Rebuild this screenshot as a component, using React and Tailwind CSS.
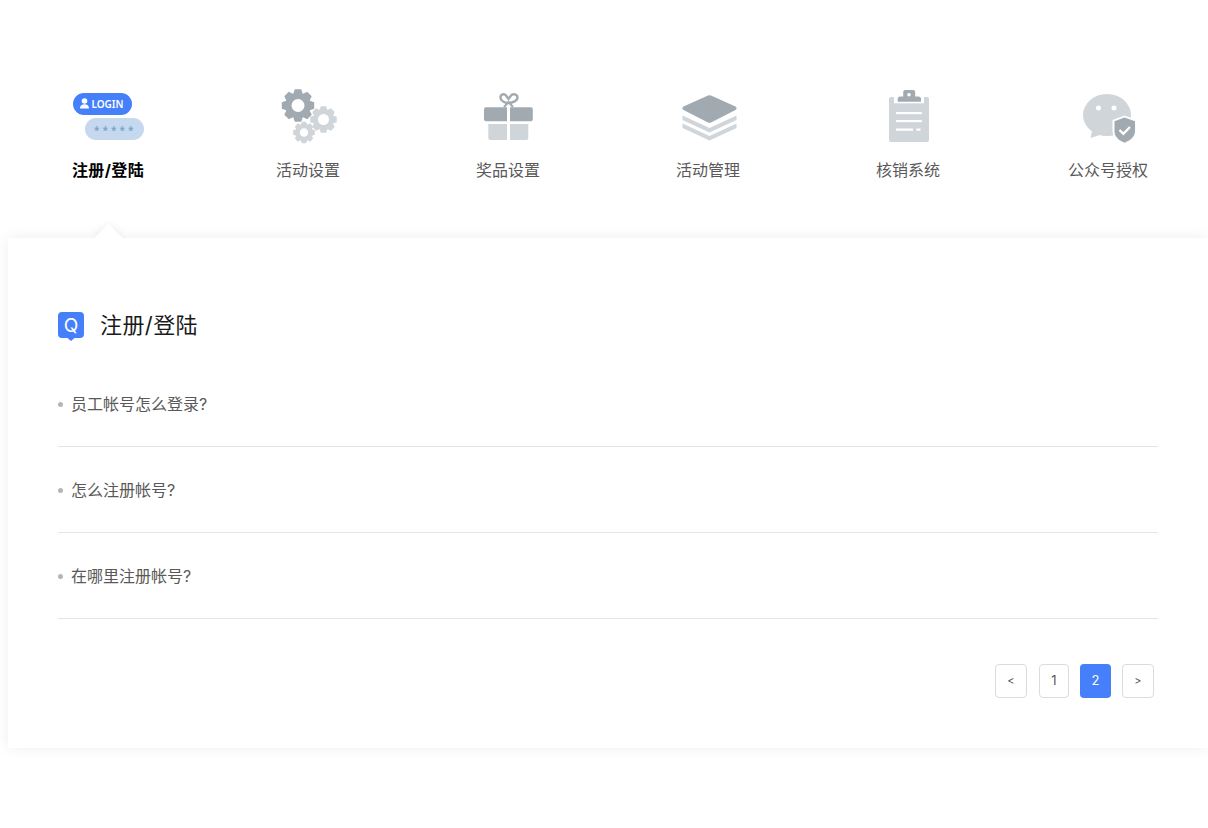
const F = "font-['Inter','Noto_Sans_CJK_SC',sans-serif]";

function gearPath(cx, cy, r, teeth = 8) {
  const pts = [];
  const outer = r, inner = r * 0.78;
  for (let i = 0; i < teeth; i++) {
    const a = (i / teeth) * Math.PI * 2;
    const w = Math.PI / teeth;
    [[-w * 0.95, inner], [-w * 0.5, outer], [w * 0.5, outer], [w * 0.95, inner]].forEach(([d, rad]) => {
      pts.push(`${(cx + Math.cos(a + d) * rad).toFixed(2)} ${(cy + Math.sin(a + d) * rad).toFixed(2)}`);
    });
  }
  return "M" + pts.join("L") + "Z";
}

const dark = "#a2aab1";
const light = "#d0d5da";

const IconLogin = () => (
  <svg width="80" height="56" viewBox="0 0 80 56" className="block">
    <rect x="5" y="5" width="59" height="22" rx="11" fill="#4580fa" />
    <circle cx="16.500" cy="13" r="2.800" fill="#fff" />
    <path d="M12 20.500c0-3 2-4.200 4.500-4.200s4.500 1.200 4.500 4.200z" fill="#fff" />
    <text x="23.500" y="20" fontSize="10" fontWeight="600" fill="#fff" fontFamily="Noto Sans, sans-serif" textLength="32">LOGIN</text>
    <rect x="17" y="30" width="59" height="22" rx="11" fill="#c6d8ee" />
    <text x="26" y="46" fontSize="10" fontWeight="700" fill="#7ba5cf" fontFamily="Noto Sans, sans-serif" letterSpacing="3.100">*****</text>
  </svg>
);

const IconGears = () => (
  <svg width="80" height="56" viewBox="0 0 80 56" className="block">
    <path d={gearPath(30, 17.500, 16.500)} fill={dark} />
    <circle cx="30" cy="17.500" r="6.500" fill="#fff" />
    <path d={gearPath(55.500, 31.500, 13.500)} fill={light} />
    <circle cx="55.500" cy="31.500" r="5.500" fill="#fff" />
    <path d={gearPath(36, 44.500, 11)} fill={light} />
    <circle cx="36" cy="44.500" r="4.200" fill="#fff" />
  </svg>
);

const IconGift = () => (
  <svg width="80" height="56" viewBox="0 0 80 56" className="block">
    <path d="M40.500 15C36 15 32.500 12.500 32.500 9.500S36 5 38 7.500l2.500 3.500 2.500-3.500C45 5 49.500 6.500 49.500 9.500S45 15 40.500 15z" fill="none" stroke={dark} strokeWidth="2.400" />
    <path d="M36 19l4.500-5 4.500 5" fill="none" stroke={dark} strokeWidth="2" />
    <path d="M16 21.300a2 2 0 0 1 2-2h21v14H18a2 2 0 0 1-2-2z" fill={dark} />
    <path d="M42 19.300h20.800a2 2 0 0 1 2 2v10a2 2 0 0 1-2 2H42z" fill={dark} />
    <path d="M20.300 36H39v16H22.300a2 2 0 0 1-2-2z" fill={light} />
    <path d="M42 36h18.300v14a2 2 0 0 1-2 2H42z" fill={light} />
  </svg>
);

const IconLayers = () => (
  <svg width="80" height="56" viewBox="0 0 80 56" className="block">
    <path d="M14.500 35.500L41.500 48l27-12.500V40l-27 12.500L14.500 40z" fill={light} />
    <path d="M14.500 27.500L41.500 40l27-12.500V32l-27 12.500L14.500 32z" fill={light} />
    <path d="M15.500 18.500L40 7.500a4 4 0 0 1 3 0L67.500 18.500a2 2 0 0 1 0 3.500L43 34.500a4 4 0 0 1-3 0L15.500 22a2 2 0 0 1 0-3.500z" fill={dark} />
  </svg>
);

const IconClipboard = () => (
  <svg width="80" height="56" viewBox="0 0 80 56" className="block">
    <rect x="21" y="9" width="40" height="45" rx="2" fill={light} />
    <path d="M26 5h30v10.300H26z" fill="#fff" />
    <path d="M29.700 13.700V11a2.500 2.500 0 0 1 2.500-2.500h3V4a2 2 0 0 1 2-2h8a2 2 0 0 1 2 2v4.500h3.300A2.500 2.500 0 0 1 53 11v2.700z" fill={dark} />
    <circle cx="41" cy="6.700" r="1.800" fill="#fff" />
    <rect x="28" y="24" width="26" height="2.200" fill="#fff" />
    <rect x="28" y="32" width="26" height="2.200" fill="#fff" />
    <rect x="28" y="40.500" width="17" height="2.200" fill="#fff" />
    <rect x="48.500" y="40.500" width="4" height="2.200" fill="#fff" />
  </svg>
);

const IconWechat = () => (
  <svg width="80" height="56" viewBox="0 0 80 56" className="block">
    <ellipse cx="39" cy="27" rx="24" ry="21" fill={light} />
    <path d="M22.500 50l2.500-12 10 8z" fill={light} />
    <circle cx="30.500" cy="20" r="2.500" fill="#fff" />
    <circle cx="46" cy="20" r="2.500" fill="#fff" />
    <path d="M44.500 32l12-4.500 12 4.500v11c0 7-6 11-12 13.500C50.500 54 44.500 50 44.500 43z" fill="#fff" />
    <path d="M46.500 33.200l10-3.700 10.500 3.700v10c0 5.700-5 9.300-10.500 11.500C51 52.500 46.500 49 46.500 43.200z" fill={dark} />
    <path d="M51.500 42l3.800 3.800 6.700-6.800" fill="none" stroke="#fff" strokeWidth="2.400" />
  </svg>
);

const tabs = [
  { label: "注册/登陆", Icon: IconLogin, active: true },
  { label: "活动设置", Icon: IconGears },
  { label: "奖品设置", Icon: IconGift },
  { label: "活动管理", Icon: IconLayers },
  { label: "核销系统", Icon: IconClipboard },
  { label: "公众号授权", Icon: IconWechat },
];

const questions = ["员工帐号怎么登录?", "怎么注册帐号?", "在哪里注册帐号?"];

export default function App() {
  return (
    <div className={`${F} bg-white h-[828px] w-[1208px] overflow-hidden pl-2 pt-[88px]`}>
      <div className="flex w-[1200px]">
        {tabs.map(({ label, Icon, active }) => (
          <div key={label} className="w-[200px] flex flex-col items-center">
            <Icon />
            <div className={`mt-[15px] text-base leading-[22px] ${active ? "font-bold text-black tracking-[0.4px]" : "text-[#595959]"}`}>{label}</div>
          </div>
        ))}
      </div>
      <div className="relative w-[1200px] h-[510px] mt-[57px] bg-white shadow-[0_0_14px_rgba(0,0,0,0.07)] px-[50px] pt-[74px]">
        <div className="absolute left-[70px] top-[-20px] w-[60px] h-[20px] overflow-hidden">
          <div className="absolute left-[19.500px] top-[9.500px] w-[21px] h-[21px] rotate-45 bg-white shadow-[0_0_8px_rgba(0,0,0,0.07)]" />
        </div>
        <div className="flex items-center h-[29px]">
          <svg width="26" height="29" viewBox="0 0 26 29" className="block">
            <path d="M4 0h18a4 4 0 0 1 4 4v18a4 4 0 0 1-4 4h-5.500L13 29l-3.500-3H4a4 4 0 0 1-4-4V4a4 4 0 0 1 4-4z" fill="#4580fa" />
            <text x="13" y="20" textAnchor="middle" fontSize="19" fill="#fff" fontFamily="Inter, sans-serif">Q</text>
          </svg>
          <span className="ml-4 text-[22px] leading-[27px] pb-0.5 tracking-[0.4px] text-[#1a1a1a]">注册/登陆</span>
        </div>
        <div className="mt-5">
          {questions.map((q) => (
            <div key={q} className="h-[86px] border-b border-[#e5e5e5] flex items-center text-base text-[#595959]">
              <span className="w-[5px] h-[5px] rounded-full bg-[#b5b5b5] mr-2 mt-[1px]" />
              <span>{q}</span>
            </div>
          ))}
        </div>
        <div className="flex justify-end items-center gap-[11px] mt-[45px] mr-1 text-[13px] text-[#595959]">
          <div className="w-8 h-[34px] border border-[#dcdcdc] rounded flex items-center justify-center text-[11px] mr-px">&lt;</div>
          <div className="w-[30px] h-[34px] border border-[#dcdcdc] rounded flex items-center justify-center">1</div>
          <div className="w-[31px] h-[34px] rounded bg-[#4580fa] text-white flex items-center justify-center">2</div>
          <div className="w-8 h-[34px] border border-[#dcdcdc] rounded flex items-center justify-center text-[11px]">&gt;</div>
        </div>
      </div>
    </div>
  );
}
